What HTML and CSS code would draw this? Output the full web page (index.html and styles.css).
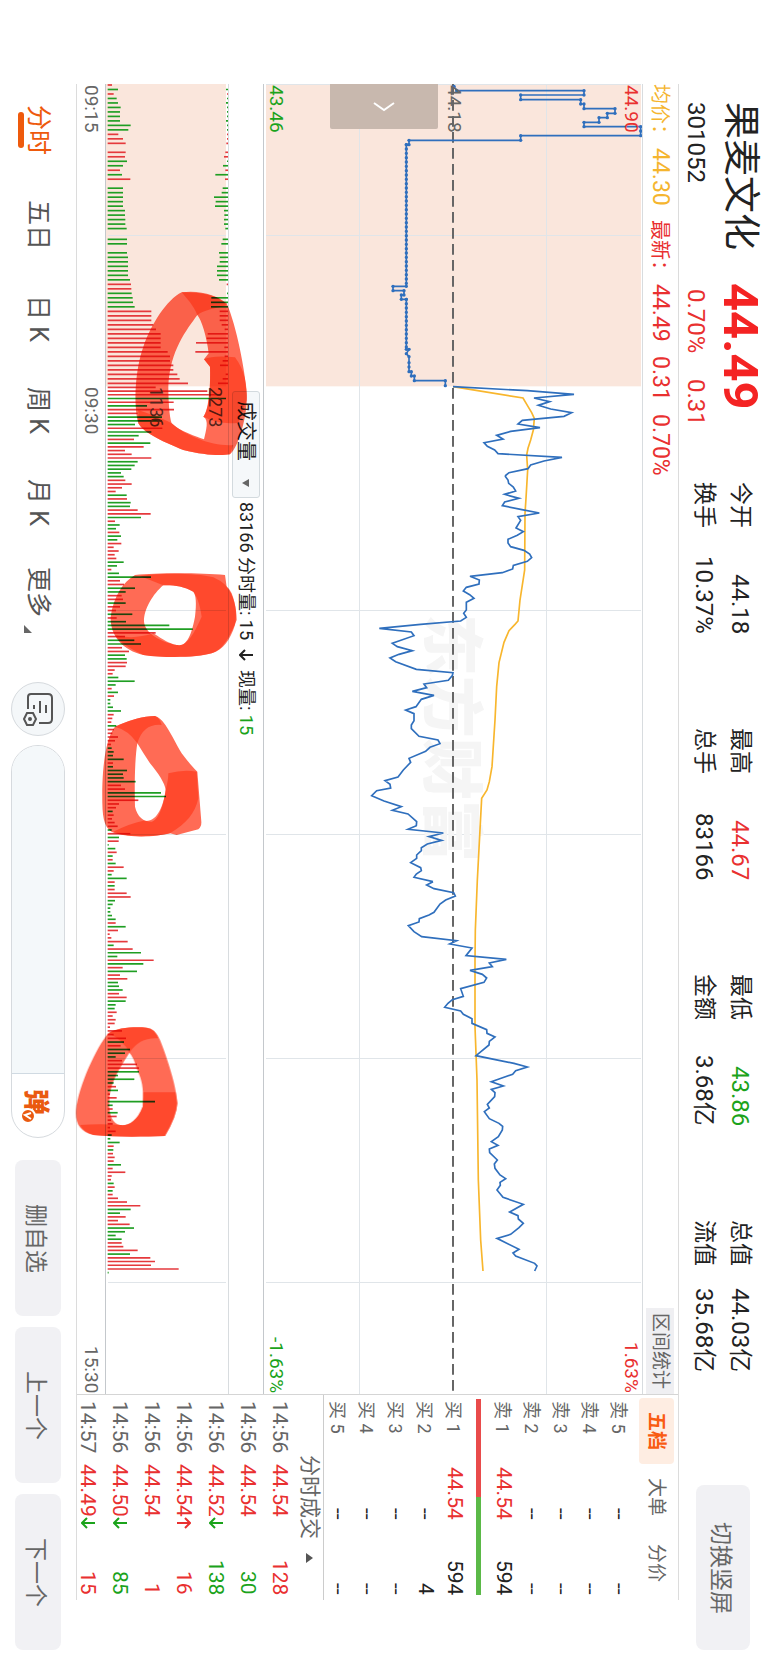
FILE: index.html
```html
<!DOCTYPE html>
<html lang="zh-CN">
<head>
<meta charset="UTF-8">
<meta name="viewport" content="width=device-width, initial-scale=1.0">
<title>果麦文化 301052</title>
<link rel="stylesheet" href="styles.css">
</head>
<body>
<header class="quote">
  <div class="identity">
    <h1 class="name">果麦文化</h1>
    <strong class="price">44.49</strong>
    <span class="code">301052</span>
    <span class="change"><span>0.70%</span><span>0.31</span></span>
  </div>
  <dl class="stats">
    <div class="stat"><dt>今开</dt><dd>44.18</dd></div>
    <div class="stat"><dt>换手</dt><dd>10.37%</dd></div>
    <div class="stat"><dt>最高</dt><dd class="up">44.67</dd></div>
    <div class="stat"><dt>总手</dt><dd>83166</dd></div>
    <div class="stat"><dt>最低</dt><dd class="down">43.86</dd></div>
    <div class="stat"><dt>金额</dt><dd>3.68亿</dd></div>
    <div class="stat"><dt>总值</dt><dd>44.03亿</dd></div>
    <div class="stat"><dt>流值</dt><dd>35.68亿</dd></div>
  </dl>
  <button type="button" class="btn rotate">切换竖屏</button>
</header>

<main>
  <section class="charts">
    <div class="info">
      <span class="avg label">均价：</span><span class="avg num">44.30</span>
      <span class="up label">最新：</span><span class="up num">44.49</span>
      <span class="up num">0.31</span>
      <span class="up num">0.70%</span>
      <button type="button" class="range">区间统计</button>
    </div>

    <div class="price-chart">
      <svg viewBox="0 0 1134 3930" preserveAspectRatio="none">
        <defs>
          <marker id="dot" markerUnits="userSpaceOnUse" markerWidth="12" markerHeight="12" refX="6" refY="6">
            <circle cx="6" cy="6" r="5" fill="#2f6fbd"/>
          </marker>
        </defs>
        <rect class="auction" x="6" y="0" width="1125" height="907"/>
        <path class="grid" d="M6 454.5H1131M6 1579.5H1131M6 2251.5H1131M6 2923.5H1131M6 3595.5H1131M286.5 0V3930M847.5 0V3930M6 1.5H1131"/>
      </svg>
      <span class="watermark">东方财富</span>
      <svg viewBox="0 0 1134 3930" preserveAspectRatio="none">
        <path class="prev-close" d="M567 0V3930"/>
        <!-- average price -->
        <g class="avg-line">
          <polyline transform="translate(360 -72)" points="207,980 417,1014 430,1036 443,1058 451,1075 448,1110 440,1140 432,1165 428,1185 431,1230"/>
          <polyline transform="translate(360 1158)" points="431,0 426,85 423,130 422,300 408,390 402,453 393,463 375,482 360,517 345,578 338,650 333,750 324,890 316,935 309,960 293,985 289,1060 280,1230"/>
          <polyline transform="translate(360 2388)" points="280,0 274,150 273,240 273,440 279,600 283,900 290,1080 297,1173"/>
        </g>
        <!-- call auction -->
        <g class="price-line" transform="translate(360 -72)">
          <polyline class="dotted" points="210,79 218,92 600,92 600,105 410,105 410,119 590,119 590,132 600,132 600,146 693,146 693,160 670,160 670,173 645,173 645,187 600,187 600,200 770,200 770,213 770,227 410,227 410,241 75,241 75,254 67,254"/>
          <polyline points="67,254 67,679"/>
          <polyline class="dotted" points="67,679 27,679 27,692 60,692 60,705 52,705 52,718 67,718"/>
          <polyline points="67,718 67,868"/>
          <polyline class="dotted" points="67,868 75,868 67,881 75,890 75,908 75,921 75,935 82,935 82,948 91,948 91,962 184,962 184,977"/>
          <path class="dots" d="M67 254V679M67 718V868"/>
        </g>
        <!-- continuous trading -->
        <g class="price-line">
          <polyline transform="translate(360 -72)" points="207,980 430,992 570,1003 450,1014 497,1025 463,1036 500,1047 563,1058 540,1069 415,1081 402,1092 468,1103 380,1114 338,1126 357,1137 300,1148 310,1159 332,1170 342,1181 534,1192 480,1203 440,1215 432,1226 375,1238 363,1248"/>
          <polyline transform="translate(360 1158)" points="363,18 372,30 374,40 388,51 395,63 362,73 405,85 362,96 355,107 410,118 466,129 402,140 410,151 396,174 418,185 400,196 372,208 372,219 380,230 420,241 437,252 443,263 430,274 388,286 386,297 355,308 258,319 286,330 285,342 247,352 238,363 257,374 270,385 247,397 247,420 239,430 247,442 230,453 110,463 -14,475 82,486 90,497 25,520 40,530 85,542 45,553 18,564 35,575 97,598 207,608 205,617 193,631 120,642 128,653 85,664 150,676 112,688 96,710 65,720 90,731 90,752 82,765 82,776 105,799 162,810 168,821 138,832 125,844 75,865 80,877 58,900 42,921 3,932 18,943 20,954 -22,962 -37,977 0,993 52,1010 25,1021 72,1032 98,1055 97,1067 72,1078 178,1089 135,1100 173,1111 130,1122 112,1133 112,1142 98,1155 98,1165 80,1178 110,1193 112,1202 97,1212 90,1222 147,1235"/>
          <polyline transform="translate(360 2388)" points="147,5 128,15 150,26 209,38 214,48 185,60 168,72 150,97 135,105 106,116 105,126 73,137 90,155 113,170 218,182 197,192 264,204 246,227 367,238 316,249 325,260 258,271 295,283 308,294 300,307 230,326 238,349 205,359 192,370 182,382 230,393 238,403 264,416 264,430 308,449 309,460 333,471 316,484 315,495 276,527 390,550 430,561 395,572 386,583 345,597 322,605 358,618 322,628 333,638 332,650 310,673 316,684 301,695 316,716 345,730 356,739 355,750 343,770 322,785 342,796 316,807 317,818 340,840 331,852 333,865 348,885 365,896 348,907 349,916 339,930 357,952 418,973 377,996 402,1007 403,1017 418,1030 405,1043 380,1063 339,1075 405,1108 387,1119 395,1128 452,1150 459,1158 452,1173"/>
        </g>
      </svg>
      <span class="scale high up">44.90</span>
      <span class="scale high end up">1.63%</span>
      <span class="scale mid">44.18</span>
      <span class="scale low down">43.46</span>
      <span class="scale low end down">-1.63%</span>
      <button type="button" class="expand" aria-label="展开">
        <svg width="22" height="12" viewBox="0 0 22 12"><path d="M1 2L11 9L21 2"/></svg>
      </button>
    </div>

    <div class="volume-title">
      <label class="indicator">
        <select aria-label="指标"><option>成交量</option></select>
        <svg width="8" height="8" viewBox="0 0 8 8"><path d="M0 4L7 0V8Z"/></svg>
      </label>
      <span>83166 分时量: 15</span>
      <svg class="trend" width="14" height="12" viewBox="0 0 14 12"><path d="M14 6H1M6 1L1 6L6 11"/></svg>
      <span>现量: <span class="down">15</span></span>
    </div>

    <div class="volume-chart">
      <svg viewBox="0 0 366 3930" preserveAspectRatio="none">
        <rect class="auction" x="0" y="0" width="360" height="907"/>
        <path class="grid" d="M6 454.5H360M6 1579.5H360M6 2251.5H360M6 2923.5H360M6 3595.5H360"/>
        <g id="bars"></g>
      </svg>
      <span class="scale vol-max">2273</span>
      <span class="scale vol-half">1136</span>
      <!-- marker pen circles -->
      <svg class="marks" viewBox="0 0 366 3930" preserveAspectRatio="none">
        <g transform="translate(-318 -72)">
          <path class="ink" d="M545 697C500 720 455 790 430 860C405 930 400 1030 415 1090C430 1120 500 1150 550 1170C610 1185 660 1188 690 1183C715 1165 745 1060 740 1000C735 930 710 800 680 730C650 705 600 695 545 697ZM592 765C560 810 510 870 505 980C505 1020 508 1070 515 1090C540 1115 590 1130 612 1138C618 1110 628 1080 610 1070C625 1050 632 1010 630 920L612 898L626 880C620 830 605 780 592 765Z"/>
          <path class="ink more" d="M545 697C600 690 655 705 680 735C650 745 610 750 592 765C580 735 560 715 545 697ZM612 898Q640 885 705 892C735 930 742 980 740 1020L715 1088Q660 1095 610 1070C628 1050 632 960 630 920ZM415 1090C430 1120 500 1150 550 1170C610 1185 660 1188 690 1183L700 1155C640 1160 560 1130 515 1090C480 1070 440 1060 415 1050Z"/>
        </g>
        <g transform="translate(-318 1158)">
          <path class="ink" d="M405 315C370 335 340 380 332 440C330 500 370 540 430 555C500 565 600 562 635 550C660 540 680 525 710 450C710 410 700 375 680 350L675 315C600 308 470 308 405 315ZM490 346C460 370 430 420 432 455C436 490 480 515 530 525C550 528 570 520 585 440C590 400 588 375 580 365C550 348 520 345 490 346Z"/>
          <path class="ink more" d="M420 318C490 308 590 310 640 322Q680 340 695 370C710 410 710 440 705 465C690 510 670 540 635 550C590 562 500 565 430 555C400 540 360 520 345 495Q400 510 460 490C490 510 510 522 530 525C550 528 570 520 605 440C600 400 588 375 580 365C550 348 520 345 490 346Q450 330 420 318Z"/>
        </g>
        <g transform="translate(-318 1158)">
          <path class="ink" d="M345 770C320 800 305 880 307 1000C308 1050 315 1080 345 1090C400 1105 470 1100 510 1090L530 1095L595 1078Q605 1070 604 1055L592 905Q575 890 545 850C520 810 495 745 465 738C420 738 380 755 345 770ZM412 820C405 860 403 940 405 1010C412 1040 430 1055 455 1055C475 1050 490 1010 497 960C495 940 475 910 450 880Q430 850 412 820Z"/>
          <path class="ink more" d="M345 770C380 755 420 738 465 738Q480 745 485 765Q430 760 412 820Q385 780 345 770ZM505 910Q550 898 590 905L595 985C585 1030 560 1060 510 1090C450 1105 380 1100 340 1085Q390 1060 430 1052C470 1060 490 1010 497 960Q505 930 505 910Z"/>
        </g>
        <g transform="translate(-318 2388)">
          <path class="ink" d="M325 460C290 500 235 620 228 690C225 730 240 755 280 765C350 772 430 770 495 768Q530 710 532 670C530 620 500 530 480 480Q465 445 440 443C400 440 350 443 325 460ZM388 518C370 550 330 600 328 660C325 700 335 730 360 735C385 738 410 725 428 680C432 620 425 600 410 565Q400 530 388 518Z"/>
          <path class="ink more" d="M325 460C350 443 400 440 440 443Q465 445 475 475Q420 470 388 518Q370 480 325 460ZM430 637H527L532 670Q530 710 495 768C430 770 350 772 280 765Q250 755 240 735Q300 730 360 735C385 738 410 725 428 680Z"/>
        </g>
      </svg>
    </div>

    <div class="time-axis"><span class="open">09:15</span><span>09:30</span><span class="close">15:30</span></div>
  </section>

  <aside class="depth">
    <nav class="depth-tabs">
      <a href="#" class="active">五档</a>
      <a href="#">大单</a>
      <a href="#">分价</a>
    </nav>
    <table class="orders">
      <tr><th>卖 5</th><td>--</td><td>--</td></tr>
      <tr><th>卖 4</th><td>--</td><td>--</td></tr>
      <tr><th>卖 3</th><td>--</td><td>--</td></tr>
      <tr><th>卖 2</th><td>--</td><td>--</td></tr>
      <tr><th>卖 1</th><td class="up">44.54</td><td>594</td></tr>
    </table>
    <div class="ratio"></div>
    <table class="orders">
      <tr><th>买 1</th><td class="up">44.54</td><td>594</td></tr>
      <tr><th>买 2</th><td>--</td><td>4</td></tr>
      <tr><th>买 3</th><td>--</td><td>--</td></tr>
      <tr><th>买 4</th><td>--</td><td>--</td></tr>
      <tr><th>买 5</th><td>--</td><td>--</td></tr>
    </table>
    <h2 class="trades-title">分时成交
      <svg width="7" height="10" viewBox="0 0 7 10"><path d="M7 5L0 0V10Z"/></svg>
    </h2>
    <table class="trades">
      <tr><th>14:56</th><td class="up">44.54</td><td class="up">128</td></tr>
      <tr><th>14:56</th><td class="up">44.54</td><td class="down">30</td></tr>
      <tr><th>14:56</th><td class="up">44.52<svg class="down" width="14" height="12" viewBox="0 0 14 12"><path d="M14 6H1M6 1L1 6L6 11"/></svg></td><td class="down">138</td></tr>
      <tr><th>14:56</th><td class="up">44.54<svg width="14" height="12" viewBox="0 0 14 12"><path d="M0 6H13M8 1L13 6L8 11"/></svg></td><td class="up">16</td></tr>
      <tr><th>14:56</th><td class="up">44.54</td><td class="up">1</td></tr>
      <tr><th>14:56</th><td class="up">44.50<svg class="down" width="14" height="12" viewBox="0 0 14 12"><path d="M14 6H1M6 1L1 6L6 11"/></svg></td><td class="down">85</td></tr>
      <tr><th>14:57</th><td class="up">44.49<svg class="down" width="14" height="12" viewBox="0 0 14 12"><path d="M14 6H1M6 1L1 6L6 11"/></svg></td><td class="up">15</td></tr>
    </table>
  </aside>
</main>

<footer class="toolbar">
  <nav class="periods">
    <a href="#" class="active">分时</a>
    <a href="#">五日</a>
    <a href="#">日 K</a>
    <a href="#">周 K</a>
    <a href="#">月 K</a>
    <a href="#" class="more-link">更多<svg width="8" height="8" viewBox="0 0 8 8"><path d="M0 0V8H8Z"/></svg></a>
  </nav>
  <button type="button" class="settings" aria-label="设置">
    <svg width="30" height="34" viewBox="0 0 30 34">
      <path d="M5 17V5Q5 2 8 2H25Q29 2 29 6V27Q29 31 25 31H16M23 13V21M17 9V21M11 13V17"/>
      <path d="M4 21H10L13 27L10 33H4L1 27Z"/>
      <circle cx="7" cy="27" r="1"/>
    </svg>
  </button>
  <div class="comment">
    <input type="text" aria-label="弹幕">
    <button type="button" class="danmu" aria-label="弹幕开关">弹
      <svg width="16" height="16" viewBox="0 0 16 16"><circle cx="8" cy="8" r="7"/><path d="M11 5L5 7L11 11"/></svg>
    </button>
  </div>
  <div class="actions">
    <button type="button" class="btn">删自选</button>
    <button type="button" class="btn">上一个</button>
    <button type="button" class="btn">下一个</button>
  </div>
</footer>
<script src="script.js"></script>
</body>
</html>
```
FILE: styles.css
```css
* {
  box-sizing: border-box;
}
html {
  writing-mode: vertical-rl;
  text-orientation: sideways;
}
body {
  margin: 0;
  display: flex;
  flex-direction: column;
  inline-size: 100vh;
  block-size: 100vw;
  background: #fff;
  color: #222;
  font-family: Roboto, "Noto Sans CJK SC", sans-serif;
  font-size: 21px;
}
h1, h2, dl, dd {
  margin: 0;
  font-weight: 400;
}
a {
  color: inherit;
  text-decoration: none;
}
button, input, select {
  writing-mode: inherit;
  text-orientation: inherit;
  font: inherit;
  color: inherit;
  margin: 0;
  padding: 0;
  border: 0;
  background: none;
}
svg {
  display: block;
  flex: none;
}
.up {
  color: #e93030;
}
.down {
  color: #1ba31b;
}
.btn {
  color: #666;
  background: #f1f1f4;
  border-radius: 8px;
  font-size: 23px;
}

/* header */
.quote {
  display: flex;
  flex: none;
  block-size: 89px;
  padding-inline: 102px 12px;
}
.identity {
  display: grid;
  grid-template-columns: 181px 1fr;
  grid-template-rows: 56px 33px;
  inline-size: 380px;
}
.name {
  font-size: 37px;
  line-height: 56px;
}
.price {
  font-size: 49px;
  line-height: 56px;
  font-weight: 700;
  color: #f42323;
}
.code, .change {
  font-size: 24px;
  line-height: 33px;
}
.change {
  display: flex;
  gap: 26px;
  padding-inline-start: 6px;
  color: #e93030;
}
.stats {
  display: grid;
  grid-template-rows: 36px 36px;
  grid-auto-columns: 152px;
  grid-auto-flow: column;
  column-gap: 94px;
  padding-block-start: 10px;
}
.stat {
  display: flex;
  justify-content: space-between;
  font-size: 23px;
  line-height: 36px;
  white-space: nowrap;
}
.stat dd {
  font-size: 24px;
}
.rotate {
  inline-size: 165px;
  block-size: 54px;
  margin-block-start: 18px;
  margin-inline-start: auto;
}

/* charts */
main {
  display: flex;
  flex: 1;
  min-block-size: 0;
  margin-inline: 84px 62px;
  border-block: 1px solid #dcdcdc;
}
.charts {
  display: flex;
  flex-direction: column;
  flex: 1;
  min-inline-size: 0;
}
.info {
  display: flex;
  block-size: 36px;
  border-block-end: 1px solid #d8dcdf;
  font-size: 20px;
  line-height: 36px;
}
.info .label {
  margin-inline-end: 4px;
}
.info .num {
  font-size: 23px;
  margin-inline-end: 14px;
}
.avg {
  color: #f5b52e;
}
.info .range {
  margin-inline-start: auto;
  margin-block: 4px 3px;
  padding-inline: 5px;
  background: #efeff2;
  color: #666;
  font-size: 19px;
  line-height: 28px;
}
.price-chart {
  position: relative;
  flex: 1;
  border-block-end: 1px solid #c4c8cc;
}
.price-chart > svg, .volume-chart > svg {
  position: absolute;
  inset: 0;
  width: 100%;
  height: 100%;
}
.auction {
  fill: #fae6dc;
}
.grid {
  fill: none;
  stroke: #e0e5e9;
  stroke-width: 3;
}
.prev-close {
  stroke: #666;
  stroke-width: 6;
  stroke-dasharray: 32 16;
}
.avg-line {
  fill: none;
  stroke: #f8b62d;
  stroke-width: 5;
}
.price-line {
  fill: none;
  stroke: #2f6fbd;
  stroke-width: 5;
}
.dotted {
  marker: url(#dot);
}
.dots {
  stroke-width: 10;
  stroke-linecap: round;
  stroke-dasharray: 0 13;
}
.watermark {
  position: absolute;
  top: 530px;
  right: 156px;
  color: #f5f5f5;
  font-size: 62px;
  font-weight: 900;
  line-height: 72px;
}
.scale {
  position: absolute;
  top: 1px;
  font-size: 19px;
  line-height: 22px;
}
.end {
  top: auto;
  bottom: 1px;
}
.high {
  right: 0;
}
.mid {
  right: 177px;
  color: #666;
}
.low {
  left: 1px;
}
.expand {
  position: absolute;
  top: 0;
  left: 66px;
  width: 108px;
  height: 45px;
  background: #c8b8ae;
  border-radius: 0 0 2px 2px;
}
.expand svg {
  margin: auto;
  fill: none;
  stroke: #fff;
  stroke-width: 2;
}
.volume-title {
  display: flex;
  align-items: center;
  block-size: 35px;
  padding-inline-start: 307px;
  border-block-end: 1px solid #d8dcdf;
  font-size: 18px;
  line-height: 34px;
}
.indicator {
  display: flex;
  align-items: center;
  gap: 18px;
  inline-size: 107px;
  block-size: 28px;
  margin-inline-end: 4px;
  padding-inline-start: 9px;
  background: #f5f8fa;
  border: 1px solid #d3dade;
  border-radius: 3px;
  font-size: 20px;
}
.indicator select {
  appearance: none;
  line-height: 26px;
}
.indicator svg {
  fill: #666;
}
.trend {
  margin-inline: 9px;
  fill: none;
  stroke: currentColor;
  stroke-width: 2;
}
.volume-chart {
  position: relative;
  block-size: 123px;
  border-block-end: 1px solid #c4c8cc;
}
.bar {
  stroke-width: 5;
}
.bar.rise {
  stroke: #e5393c;
}
.bar.fall {
  stroke: #1f9e23;
}
.vol-max, .vol-half {
  top: 303px;
  color: #555;
  font-size: 18px;
}
.vol-max {
  right: 2px;
}
.vol-half {
  right: 61px;
}
.volume-chart > .marks {
  overflow: visible;
  mix-blend-mode: multiply;
  pointer-events: none;
}
.ink {
  fill: #ff6b55;
  fill-rule: evenodd;
}
.ink.more {
  fill: #ff3b1c;
  fill-opacity: 0.7;
}
.time-axis {
  display: flex;
  block-size: 28px;
  padding-inline: 1px;
  color: #666;
  font-size: 19px;
  line-height: 28px;
}
.time-axis .open {
  inline-size: 302px;
}
.time-axis .close {
  margin-inline-start: auto;
}

/* order book */
.depth {
  inline-size: 206px;
  border-inline-start: 1px solid #d5d5d5;
}
.depth-tabs {
  display: flex;
  block-size: 44px;
  padding-block: 4px 5px;
  padding-inline-start: 3px;
  color: #666;
  font-size: 19px;
  line-height: 35px;
  text-align: center;
}
.depth-tabs a {
  inline-size: 66px;
}
.depth-tabs .active {
  background: #feede2;
  border-radius: 4px;
  color: #f95c12;
  font-weight: 700;
}
table {
  border-collapse: collapse;
  table-layout: fixed;
  inline-size: 200px;
}
th, td {
  padding: 0;
  font-weight: 400;
  text-align: end;
  white-space: nowrap;
}
th {
  padding-inline-start: 6px;
  color: #666;
  text-align: start;
}
.orders tr {
  block-size: 29px;
}
.orders th {
  inline-size: 50px;
  font-size: 18px;
}
.orders td {
  line-height: 29px;
}
.orders td:nth-child(2) {
  inline-size: 75px;
}
.ratio {
  block-size: 5px;
  margin-block: 8px 7px;
  margin-inline: 4px 5px;
  background: linear-gradient(to bottom, #e94b4b 50%, #5bb948 50%);
}
.trades-title {
  display: flex;
  align-items: center;
  gap: 14px;
  block-size: 28px;
  padding-inline-start: 60px;
  border-block-start: 1px solid #ccc;
  color: #666;
  font-size: 21px;
  line-height: 27px;
}
.trades-title svg {
  fill: #555;
}
.trades tr {
  block-size: 32px;
}
.trades td, .trades th {
  line-height: 32px;
}
.trades th {
  inline-size: 69px;
}
.trades td:nth-child(2) {
  inline-size: 70px;
  text-align: start;
}
.trades svg {
  display: inline-block;
  fill: none;
  stroke: currentColor;
  stroke-width: 2;
}

/* bottom toolbar */
.toolbar {
  display: flex;
  align-items: center;
  flex: none;
  block-size: 76px;
  padding-inline: 105px 12px;
}
.periods {
  display: flex;
  gap: 45px;
  inline-size: 577px;
  color: #555;
  font-size: 25px;
  line-height: 40px;
  white-space: nowrap;
}
.periods .active {
  position: relative;
  color: #ee5a0c;
}
.periods .active::after {
  content: "";
  position: absolute;
  top: 7px;
  left: 0;
  width: 6px;
  height: 36px;
  border-radius: 3px;
  background: #ee5a0c;
}
.periods .more-link {
  display: flex;
  align-items: end;
  gap: 8px;
  margin-inline-start: -4px;
}
.periods svg {
  margin-block-end: 6px;
  fill: #666;
}
.settings {
  inline-size: 54px;
  block-size: 54px;
  background: #f4f7f9;
  border: 1px solid #d6dade;
  border-radius: 50%;
}
.settings svg {
  margin: auto;
  fill: none;
  stroke: #555;
  stroke-width: 2;
}
.comment {
  display: flex;
  flex: 1;
  min-inline-size: 0;
  block-size: 54px;
  margin-inline: 9px 22px;
  border: 1px solid #d6dade;
  border-radius: 27px;
  overflow: hidden;
}
.comment input {
  flex: 1;
  min-inline-size: 0;
  background: #f4f8fa;
  border-inline-end: 1px solid #d0dae2;
}
.danmu {
  position: relative;
  inline-size: 63px;
  padding-inline-end: 6px;
  color: #ea5a10;
  font-size: 26px;
  font-weight: 900;
}
.danmu svg {
  position: absolute;
  left: 8px;
  top: 34px;
  fill: #ea5a10;
  stroke: #fff;
  stroke-width: 2;
}
.danmu svg path {
  fill: none;
}
.actions {
  display: flex;
  gap: 11px;
}
.actions .btn {
  inline-size: 156px;
  block-size: 46px;
}
```
FILE: script.js
```js
// r = rise, g = fall, - = no trade; the number is the bar length
const auctionMatched = [
  [3, 13.46, "r13 g31 r18 g27 g31 g39 g37 g37 g37 g69 g62 r32 r46 r54 - r54 r52 g58 g46 r37 g43 r68 - g46 g46 g46 g46 g46 g52 g52 g53 g53 g57"],
  [466, 13.5, "g58 g58 - g58 g61 g61 g61 g61 g61 g67 r70 r71 g72 g75 g76 g81 r131 r131 r131 r137 r145 r159 r159 r159 r159 r180 r187 r187 r197 r197 r209 r216 r241"]
];
const auctionLeft = [
  [3, 13.46, "- g6 r3 g3 g6 g3 g3 g3 g6 g3 g3 r3 r3 r5 - r8 r12 g3 g15 r8 g38 r9 - g16 g19 g42 g37 g39 g12 g11 g12 g12 g8"],
  [466, 13.5, "g16 g20 - g27 g25 g25 g33 g33 g33 g27 r4 - g3 g50 g51 g51 r25 r25 r25 r19 r10 r61 r64 r96 r11 r98 r10 r16 r24 - r7 r16 r30"]
];
const minutes = [
  [910, 11.16, "r144 r299 r341 g355 r198 g118 r199 r90 g163 g163 g82 r164 g131 g93 r79 g128 r108 r52 r72 r131 g90 g81 g71 " +
  "g40 g48 r53 r72 r43 r24 g57 r58 g69 g67 r90 r129 g100 r22 g36 g25 r35 g40 g29 r41 r18 r33 r21 r26 g48 g28 r11 g34 g130 r37 r49 g82 g54 r42 r46 g54 r37 " +
  "r25 g74 r27 g55 g185 g255 r144 r52 g80 g100 r43 r64 g52 g57 r58 r54 r21 r15 g32 g81 g24 r12 g31 r19 g8 g8 g16 g40 r18 r14 r11 g26 r19 r14 r31 r22 r10 g12 g18 g16 g48 r16 g16 g58 g46 g48 g84 r40 r52 g160 g175 r92 r34 r25 g15 r18 r13 r21 r30 g12 " +
  "r68 g34 r33 g3 g23 r27 g15 r15 g24 r48 r18 g12 g57 r21 g21 r21 r57 r69 g22 g15 g8 g8 g13 g24 r24 g54 r31 r6 r11 r60 g18 r75 g100 g29 r138 g107 r45 g88 r37 r59 g31 g34 g45 r34 r57 g54 g24 g21 r27 r15 r24 r21 r7 r43 r18 r55 g49 r39 g67 g52 " +
  "g24 r43 r88 r94 g94 g31 g80 g18 r25 g31 r7 r27 g142 g15 r15 g30 r27 r10 r15 r7 r24 g12 g8 g36 r18 g17 r16 r21 r18 g40 r15 r53 r12 r10 g18 r21 g15 r15 r31 r58 r98 g69 g37 r54 r31 r66 g79 g52 g24 g42 r42 r47 r90 g67 r128 r142 r130 r213 g3"]
];

const bars = document.getElementById("bars");

function drawBars(groups, base, direction) {
  for (const [start, step, data] of groups) {
    data.split(" ").forEach((item, i) => {
      if (item === "-") return;
      const y = start + i * step;
      const line = document.createElementNS("http://www.w3.org/2000/svg", "line");
      line.setAttribute("class", item[0] === "r" ? "bar rise" : "bar fall");
      line.setAttribute("x1", base);
      line.setAttribute("x2", base + direction * Number(item.slice(1)));
      line.setAttribute("y1", y);
      line.setAttribute("y2", y);
      bars.appendChild(line);
    });
  }
}

drawBars(auctionMatched, 5, 1);
drawBars(minutes, 5, 1);
drawBars(auctionLeft, 366, -1);
```
